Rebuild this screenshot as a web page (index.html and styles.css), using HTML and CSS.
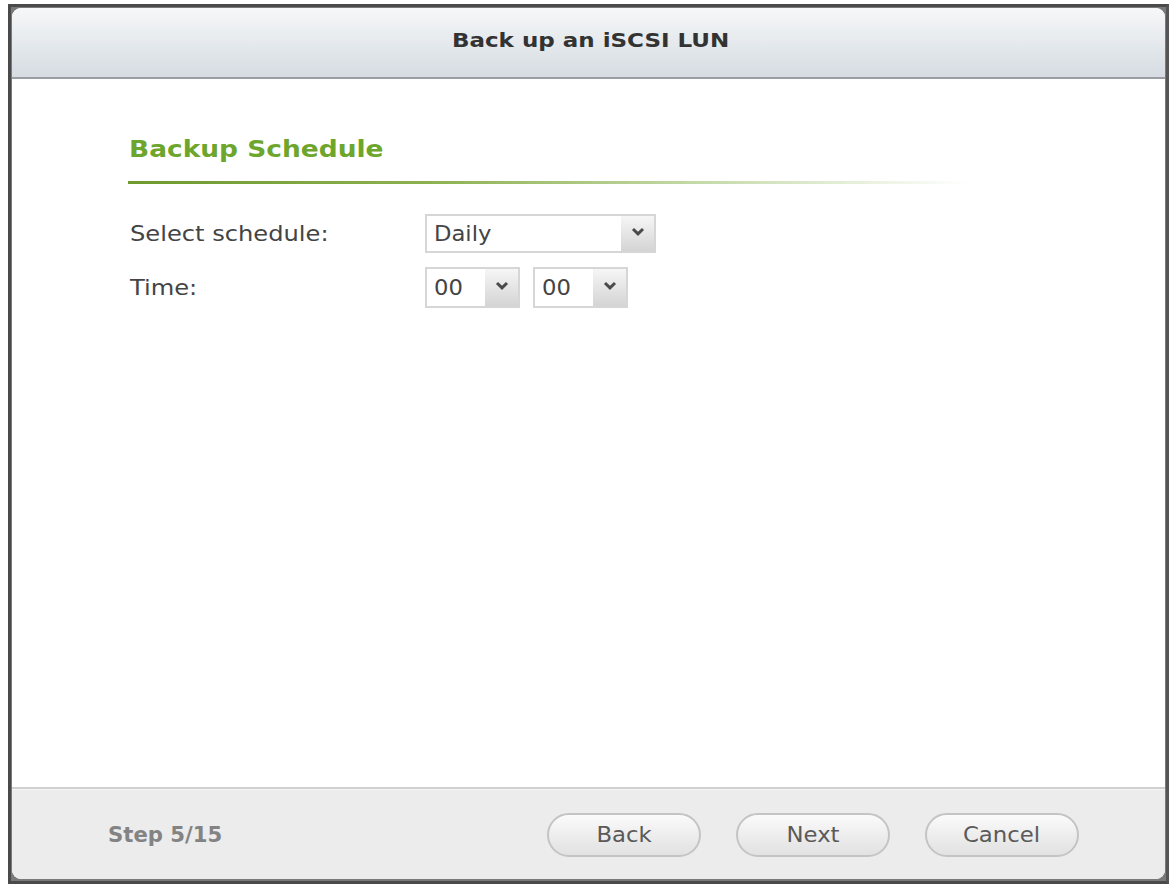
FILE: index.html
```html
<!DOCTYPE html>
<html>
<head>
<meta charset="utf-8">
<title>Back up an iSCSI LUN</title>
<link rel="stylesheet" href="styles.css">
</head>
<body>
<div class="frame">
  <div class="dialog">
    <div class="header"><h1 class="title">Back up an iSCSI LUN</h1></div>
    <div class="body">
      <h2 class="section"><span class="stretch">Backup Schedule</span></h2>
      <div class="rule"></div>
      <div class="form">
        <div class="row">
          <span class="label"><span class="stretch">Select schedule:</span></span>
          <div class="select wide"><span class="val"><span class="stretch">Daily</span></span><span class="arrow"><svg width="14" height="9" viewBox="0 0 14 9"><path d="M2 2 L7 6.8 L12 2" fill="none" stroke="#4a4a4a" stroke-width="3"/></svg></span></div>
        </div>
        <div class="row">
          <span class="label"><span class="stretch">Time:</span></span>
          <div class="select small"><span class="val"><span class="stretch">00</span></span><span class="arrow"><svg width="14" height="9" viewBox="0 0 14 9"><path d="M2 2 L7 6.8 L12 2" fill="none" stroke="#4a4a4a" stroke-width="3"/></svg></span></div>
          <div class="select small"><span class="val"><span class="stretch">00</span></span><span class="arrow"><svg width="14" height="9" viewBox="0 0 14 9"><path d="M2 2 L7 6.8 L12 2" fill="none" stroke="#4a4a4a" stroke-width="3"/></svg></span></div>
        </div>
      </div>
    </div>
    <div class="footer">
      <span class="step"><span class="stretch">Step 5/15</span></span>
      <div class="buttons">
        <button class="btn"><span class="stretch">Back</span></button>
        <button class="btn"><span class="stretch">Next</span></button>
        <button class="btn"><span class="stretch">Cancel</span></button>
      </div>
    </div>
  </div>
</div>
</body>
</html>
```
FILE: styles.css
```css
html, body {
  margin: 0;
  padding: 0;
  background: #ffffff;
  width: 1176px;
  height: 884px;
  overflow: hidden;
}
.stretch {
  display: inline-block;
  transform: scaleX(1.15);
  transform-origin: left center;
}
.frame {
  margin: 4px 7px 0 8px;
  height: 880px;
  border: 3px solid #4a4a4a;
  border-right-color: #555;
  background: #7a7a7a;
  box-sizing: border-box;
  padding: 1px 1px 2px 1px;
}
.dialog {
  height: 100%;
  display: flex;
  flex-direction: column;
  background: #fff;
  border-radius: 9px;
  overflow: hidden;
}
.header {
  height: 71px;
  flex: none;
  box-sizing: border-box;
  padding-bottom: 6px;
  background: linear-gradient(#f6f7f8, #e2e7eb 60%, #d6dce2);
  border-bottom: 2px solid #9a9ea2;
  display: flex;
  align-items: center;
  justify-content: center;
}
.title {
  margin: 0 0 0 4px;
  font-family: "DejaVu Sans", sans-serif;
  font-weight: bold;
  font-size: 20px;
  color: #333;
  transform: scaleX(1.15);
}
.body {
  flex: 1;
  background: #fff;
  padding: 52px 0 0 116px;
  border-bottom: 2px solid #d0d0d0;
}
.section {
  margin: 0;
  font-family: "DejaVu Sans", Verdana, sans-serif;
  font-weight: bold;
  font-size: 23px;
  color: #6ea52c;
  line-height: 36px;
  padding-left: 1px;
}
.rule {
  margin-top: 14px;
  height: 3px;
  width: 840px;
  background: linear-gradient(90deg, #6e9a2e 0%, #8cb04e 35%, #c8dcae 70%, rgba(255,255,255,0) 100%);
}
.form {
  margin-top: 30px;
  display: flex;
  flex-direction: column;
  gap: 14px;
}
.row {
  display: flex;
  align-items: center;
  gap: 13px;
}
.label {
  width: 297px;
  margin-right: -13px;
  padding-left: 2px;
  box-sizing: border-box;
  font-family: "DejaVu Sans", Verdana, sans-serif;
  font-size: 21px;
  color: #444;
}
.select {
  display: flex;
  height: 39px;
  box-sizing: border-box;
  border: 2px solid #d6d6d6;
  background: #fff;
}
.select.wide { width: 231px; }
.select.small { width: 95px; height: 41px; }
.val {
  flex: 1;
  padding-left: 7px;
  display: flex;
  align-items: center;
  font-family: "DejaVu Sans", Verdana, sans-serif;
  font-size: 21px;
  color: #444;
}
.val .stretch { transform: scaleX(1.08); }
.arrow {
  width: 33px;
  display: flex;
  align-items: center;
  justify-content: center;
  background: linear-gradient(#f6f6f6, #d4d4d4);
  padding-bottom: 4px;
  box-sizing: border-box;
}
.footer {
  flex: none;
  height: 89px;
  background: #ececec;
  border-top: 1px solid #f6f6f6;
  display: flex;
  align-items: center;
  padding: 0 0 0 96px;
}
.step {
  font-family: "DejaVu Sans Condensed", "DejaVu Sans", sans-serif;
  font-weight: bold;
  font-size: 22px;
  color: #838383;
  width: 439px;
}
.step .stretch { transform: scaleX(1.07); }
.buttons {
  display: flex;
  gap: 35px;
}
.btn {
  width: 154px;
  height: 44px;
  border-radius: 22px;
  border: 2px solid #c4c4c4;
  background: linear-gradient(#fbfbfb, #ececec 55%, #e2e2e2);
  font-family: "DejaVu Sans Condensed", "DejaVu Sans", sans-serif;
  font-size: 22px;
  color: #5a5a5a;
  padding: 0;
}
.btn .stretch { transform: scaleX(1.15); transform-origin: center; }
```
